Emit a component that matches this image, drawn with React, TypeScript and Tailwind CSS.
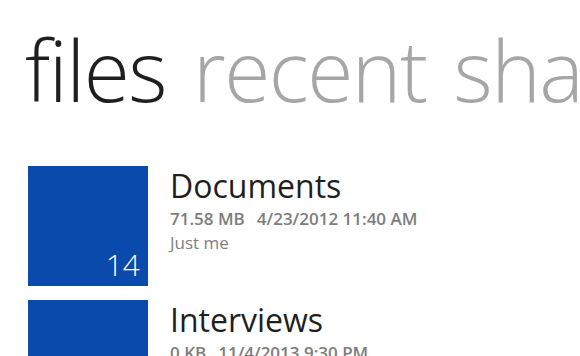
const folders = [
  { name: 'Documents', size: '71.58 MB', date: '4/23/2012 11:40 AM', shared: 'Just me', count: 14 },
  { name: 'Interviews', size: '0 KB', date: '11/4/2013 9:30 PM', shared: 'Just me', count: 0 },
]

export default function App() {
  return (
    <div
      className="h-[356px] w-[580px] overflow-hidden bg-white"
      style={{ fontFamily: '"Open Sans", "Liberation Sans", sans-serif' }}
    >
      <div className="flex gap-[27px] whitespace-nowrap pl-[25px] pt-[20px] text-[84px] font-light leading-[100px] tracking-[-1.5px]">
        <span className="text-[#1f1f1f]">files</span>
        <span className="text-[#a6a6a6]">recent</span>
        <span className="text-[#a6a6a6]">shared</span>
      </div>

      <div className="mt-[46px] flex flex-col gap-[14px] pl-[28px]">
        {folders.map((f) => (
          <div key={f.name} className="flex gap-[22px]">
            <div className="flex h-[120px] w-[120px] shrink-0 items-end justify-end bg-[#0b4aad] px-[8px] pb-[2px]">
              {f.count > 0 && (
                <span className="text-[30px] font-light leading-[38px] text-white">{f.count}</span>
              )}
            </div>
            <div className="flex flex-col">
              <span className="text-[32px] font-normal leading-[40px] text-[#1f1f1f]">{f.name}</span>
              <span className="text-[17px] font-semibold leading-[25px] text-[#7d7d7d]">
                {f.size}
                <span className="ml-[12px]">{f.date}</span>
              </span>
              <span className="text-[17px] leading-[23px] text-[#808080]">{f.shared}</span>
            </div>
          </div>
        ))}
      </div>
    </div>
  )
}
